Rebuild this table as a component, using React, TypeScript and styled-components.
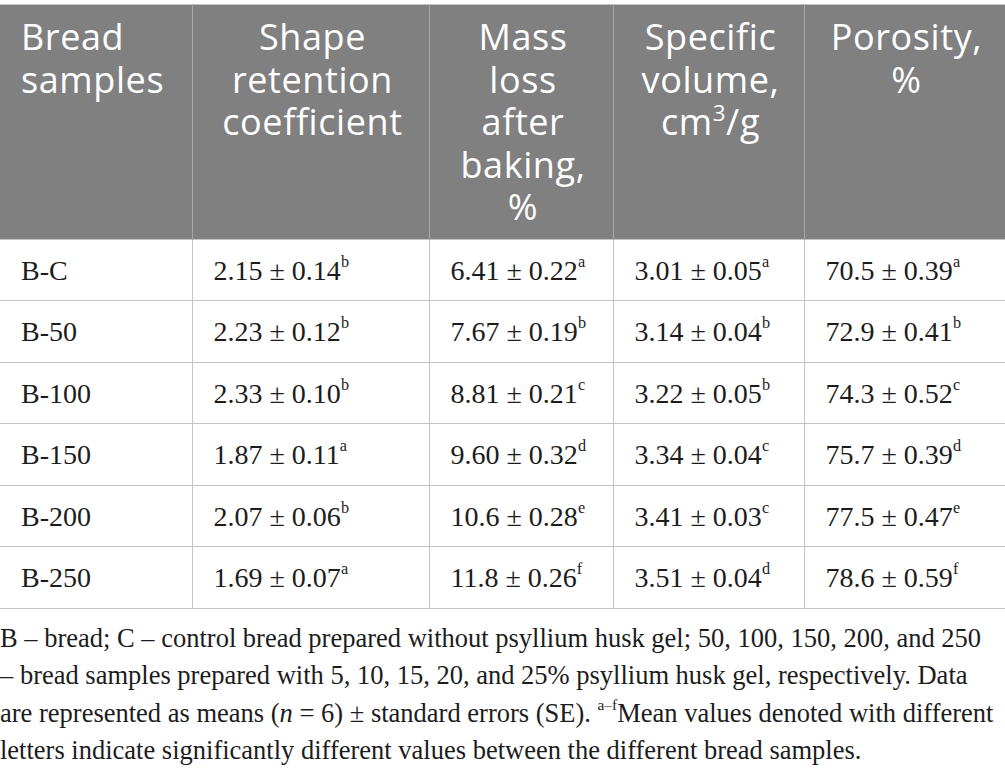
import styled, { createGlobalStyle } from "styled-components";

const GlobalStyle = createGlobalStyle`
  html, body {
    margin: 0;
    padding: 0;
    background: #fff;
  }
`;

const Page = styled.div`
  width: 1005px;
  padding-top: 4px;
`;

const Table = styled.table`
  width: 1005px;
  border-collapse: collapse;
  table-layout: fixed;
  border-top: 1px solid #c4c4c4;
  border-bottom: 1px solid #c4c4c4;
`;

const HeadCell = styled.th<{ $left?: boolean }>`
  background: #808080;
  color: #fff;
  font-family: "Open Sans", "Lato", sans-serif;
  font-weight: 400;
  font-size: 36px;
  letter-spacing: 0.6px;
  line-height: 42.6px;
  text-align: ${({ $left }) => ($left ? "left" : "center")};
  vertical-align: top;
  padding: 11px 14px 10px 18px;
  border-left: 1px solid #a6a6a6;
  border-right: 1px solid #a6a6a6;

  &:first-child {
    border-left: none;
    padding-left: 21px;
  }
`;

const Cell = styled.td`
  font-family: "Liberation Serif", "Times New Roman", serif;
  font-size: 28px;
  color: #1c1c1c;
  height: 59.5px;
  padding: 1px 0 0 21px;
  vertical-align: middle;
  border: 1px solid #c4c4c4;
  white-space: nowrap;

  &:first-child {
    border-left: none;
  }
`;

const Sup = styled.sup`
  font-size: 58%;
  line-height: 0;
  vertical-align: 0.8em;
`;

const HeadSup = styled.sup`
  font-size: 62%;
  line-height: 0;
  vertical-align: 0.65em;
`;

const Note = styled.p`
  margin: 11px 0 0;
  font-family: "Liberation Serif", "Times New Roman", serif;
  font-size: 26.5px;
  line-height: 37.3px;
  color: #1c1c1c;
  white-space: nowrap;
`;

const Italic = styled.i`
  font-style: italic;
`;

type Value = [string, string];

const rows: { name: string; values: Value[] }[] = [
  { name: "B-C", values: [["2.15 ± 0.14", "b"], ["6.41 ± 0.22", "a"], ["3.01 ± 0.05", "a"], ["70.5 ± 0.39", "a"]] },
  { name: "B-50", values: [["2.23 ± 0.12", "b"], ["7.67 ± 0.19", "b"], ["3.14 ± 0.04", "b"], ["72.9 ± 0.41", "b"]] },
  { name: "B-100", values: [["2.33 ± 0.10", "b"], ["8.81 ± 0.21", "c"], ["3.22 ± 0.05", "b"], ["74.3 ± 0.52", "c"]] },
  { name: "B-150", values: [["1.87 ± 0.11", "a"], ["9.60 ± 0.32", "d"], ["3.34 ± 0.04", "c"], ["75.7 ± 0.39", "d"]] },
  { name: "B-200", values: [["2.07 ± 0.06", "b"], ["10.6 ± 0.28", "e"], ["3.41 ± 0.03", "c"], ["77.5 ± 0.47", "e"]] },
  { name: "B-250", values: [["1.69 ± 0.07", "a"], ["11.8 ± 0.26", "f"], ["3.51 ± 0.04", "d"], ["78.6 ± 0.59", "f"]] },
];

const widths = [192, 237, 184, 191, 201];

export default function App() {
  return (
    <Page>
      <GlobalStyle />
      <Table>
        <colgroup>
          {widths.map((w, i) => (
            <col key={i} style={{ width: w }} />
          ))}
        </colgroup>
        <thead>
          <tr>
            <HeadCell $left>
              Bread
              <br />
              samples
            </HeadCell>
            <HeadCell>
              Shape
              <br />
              retention
              <br />
              coefficient
            </HeadCell>
            <HeadCell>
              Mass
              <br />
              loss
              <br />
              after
              <br />
              baking,
              <br />%
            </HeadCell>
            <HeadCell>
              Specific
              <br />
              volume,
              <br />
              cm<HeadSup>3</HeadSup>/g
            </HeadCell>
            <HeadCell>
              Porosity,
              <br />%
            </HeadCell>
          </tr>
        </thead>
        <tbody>
          {rows.map((r) => (
            <tr key={r.name}>
              <Cell>{r.name}</Cell>
              {r.values.map(([v, s], i) => (
                <Cell key={i}>
                  {v}
                  <Sup>{s}</Sup>
                </Cell>
              ))}
            </tr>
          ))}
        </tbody>
      </Table>
      <Note>
        B – bread; C – control bread prepared without psyllium husk gel; 50, 100, 150, 200, and 250
        <br />– bread samples prepared with 5, 10, 15, 20, and 25% psyllium husk gel, respectively. Data
        <br />
        are represented as means (<Italic>n</Italic> = 6) ± standard errors (SE). <Sup>a–f</Sup>Mean values denoted with
        different
        <br />
        letters indicate significantly different values between the different bread samples.
      </Note>
    </Page>
  );
}
